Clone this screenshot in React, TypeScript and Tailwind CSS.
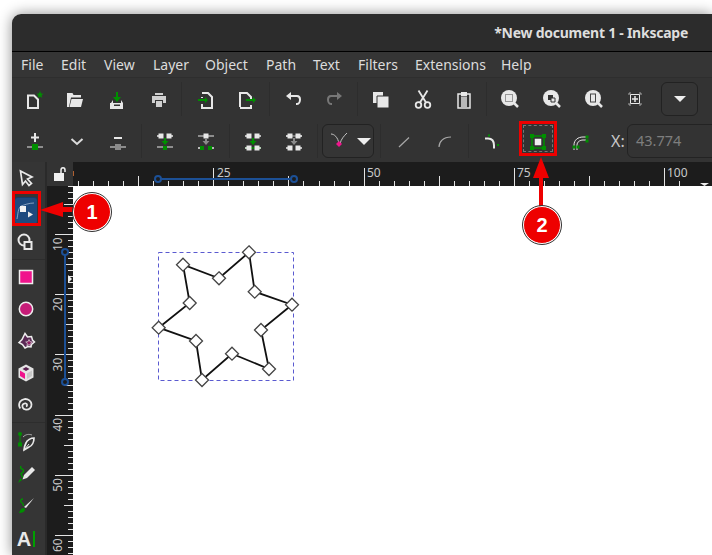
const W = "#e8e8e8";
const G = "#008f00";
const A = "#8a8a8a";

function Ico({ children }: { children: React.ReactNode }) {
  return (
    <svg width="28" height="28" viewBox="0 0 28 28" fill="none">
      {children}
    </svg>
  );
}

function Tool({ wide, children }: { wide?: boolean; children: React.ReactNode }) {
  return (
    <div className={wide ? "w-[42px] h-full flex items-center justify-center shrink-0" : "w-[41px] h-full flex items-center justify-center shrink-0"}>
      <Ico>{children}</Ico>
    </div>
  );
}

function Sep() {
  return (
    <div className="w-[5px] h-full flex justify-center items-center shrink-0">
      <div className="w-px h-[34px] bg-[#2d2d2d]"></div>
    </div>
  );
}

function Sep6() {
  return (
    <div className="w-[6px] h-full flex justify-center items-center shrink-0">
      <div className="w-px h-[34px] bg-[#2d2d2d]"></div>
    </div>
  );
}

function Box({ x, y, s = 5, c = W }: { x: number; y: number; s?: number; c?: string }) {
  return <rect x={x - s / 2} y={y - s / 2} width={s} height={s} fill={c} />;
}

function ArrowDown({ c = G }: { c?: string }) {
  return <path d="M13 11h2v3h2.500L14 18l-3.500-4H13z" fill={c} />;
}

// pair of nodes with short stubs on either side
function Pair({ y, bar }: { y: number; bar?: string }) {
  return (
    <g>
      <path d={`M6 ${y}h16`} stroke={bar || "none"} strokeWidth="1.500" />
      <path d={`M6 ${y}h3M19 ${y}h3`} stroke={W} strokeWidth="1.500" />
      <Box x={10} y={y} />
      <Box x={18} y={y} />
    </g>
  );
}

function Loupe({ children }: { children: React.ReactNode }) {
  return (
    <g>
      <circle cx="13" cy="13" r="8" fill={W} />
      <path d="M18 18l4 4" stroke={W} strokeWidth="2.500" />
      {children}
    </g>
  );
}

function TopBar() {
  return (
    <div className="h-[38px] bg-[#2c2c2c] border-b border-black flex items-center justify-end pr-[24px] rounded-tl-[9px] shrink-0">
      <span className="text-[14px] font-bold text-[#dedede] font-['Noto_Sans',sans-serif] tracking-[-0.25px]">*New document 1 - Inkscape</span>
    </div>
  );
}

function MenuBar() {
  const items: [string, string][] = [
    ["File", "w-[40px]"],
    ["Edit", "w-[43px]"],
    ["View", "w-[49px]"],
    ["Layer", "w-[52px]"],
    ["Object", "w-[61px]"],
    ["Path", "w-[47px]"],
    ["Text", "w-[45px]"],
    ["Filters", "w-[57px]"],
    ["Extensions", "w-[86px]"],
    ["Help", "w-[40px]"],
  ];
  return (
    <div className="h-[26px] bg-[#353535] border-b border-[#2e2e2e] flex items-center pl-[9px] shrink-0">
      {items.map(([t, w]) => (
        <span key={t} className={`${w} text-[14px] text-[#dcdcdc] font-['Noto_Sans',sans-serif]`}>{t}</span>
      ))}
    </div>
  );
}

function RowOne() {
  return (
    <div className="h-[42px] bg-[#333333] flex items-center shrink-0">
      <Tool wide>
        <path d="M9 10.500h6l4 4V23H9z" stroke={W} strokeWidth="2" />
        <path d="M21 6l1 2.500 2.500.2-2 1.600.7 2.500-2.200-1.400-2.200 1.400.7-2.500-2-1.600 2.500-.2z" fill={G} />
      </Tool>
      <Tool wide>
        <path d="M6 8h5.500l1 2H20v2.500H10L8 22H6z" fill={W} />
        <path d="M10.500 14H22l-2 8H8.500z" fill={W} />
      </Tool>
      <Tool wide>
        <path d="M13 7h2v5h3l-4 5-4-5h3z" fill={G} />
        <path d="M8 18l2-3v3h8v-3l2 3v6H7v-6z" fill={W} />
        <path d="M11 19.500h6v1.500h-6z" fill="#333" />
      </Tool>
      <Tool>
        <path d="M10 8h8v2h-8zM7 11h14v7h-3v-3H10v3H7zM11 16h6v6h-6z" fill="#d0d0d0" />
      </Tool>
      <Sep />
      <Tool wide>
        <path d="M11 8h6l4 4v11H11v-4" stroke={W} strokeWidth="2" />
        <path d="M11 12v1" stroke={W} strokeWidth="2" />
        <path d="M7 14h7v-2l3 3-3 3v-2H7z" fill={G} />
      </Tool>
      <Tool>
        <path d="M7 22V8h7l4 4v2M18 20v3H7" stroke={W} strokeWidth="2" />
        <path d="M13 14h7v-2l3 3-3 3v-2h-7z" fill={G} />
      </Tool>
      <Sep />
      <Tool wide>
        <path d="M9 11h9c2.500 0 3 1.500 3 3.500S20 19 18 19h-1" stroke={W} strokeWidth="2" />
        <path d="M12 7l-5 4 5 4z" fill={W} />
      </Tool>
      <Tool>
        <path d="M19 11h-9c-2.500 0-3 1.500-3 3.500S8 19 10 19h1" stroke="#777" strokeWidth="2" />
        <path d="M16 7l5 4-5 4z" fill="#777" />
      </Tool>
      <Sep />
      <Tool wide>
        <path d="M6 7h10v11H6z" fill={W} />
        <path d="M10 11h12v12H10z" fill={W} stroke="#333" strokeWidth="1" />
      </Tool>
      <Tool>
        <circle cx="9.500" cy="20" r="2.800" stroke={W} strokeWidth="1.800" />
        <circle cx="18.500" cy="20" r="2.800" stroke={W} strokeWidth="1.800" />
        <path d="M11 17.500L18.500 5.500M17 17.500L9.500 5.500" stroke={W} strokeWidth="1.800" />
      </Tool>
      <Tool>
        <path d="M8 9h12v14H8z" stroke={W} strokeWidth="1.500" />
        <path d="M11 11.500h6V22h-6z" fill="#b8b8b8" />
        <path d="M11 7h6v4h-6z" fill={W} />
      </Tool>
      <Sep />
      <Tool wide>
        <Loupe>
          <path d="M9.500 9.500h7v7h-7z" stroke="#444" strokeWidth="1" strokeDasharray="1 1" />
        </Loupe>
      </Tool>
      <Tool wide>
        <Loupe>
          <path d="M10 10h5v5h-5z" fill="#333" />
          <path d="M13 13h4v4h-4z" fill={W} stroke="#333" />
        </Loupe>
      </Tool>
      <Tool>
        <Loupe>
          <path d="M10 8.500h6v9h-6z" fill="#444" />
          <path d="M11 9.500h4v7h-4z" fill={W} />
        </Loupe>
      </Tool>
      <Tool>
        <path d="M8 10V8h2M18 8h2v2M20 18v2h-2M10 20H8v-2" stroke="#a8a8a8" strokeWidth="1" />
        <path d="M9.500 9.500h9v9h-9z" stroke={W} strokeWidth="1" />
        <path d="M14 11v6M11 14h6" stroke={W} strokeWidth="1.500" />
      </Tool>
      <div className="w-[5px] shrink-0"></div>
      <div className="w-[37px] h-[34px] ml-px bg-[#353535] border border-[#222] rounded-md flex items-center justify-center shrink-0">
        <div className="w-0 h-0 border-x-[6px] border-x-transparent border-t-[6px] border-t-[#eeeeee]"></div>
      </div>
    </div>
  );
}

function RowTwo() {
  return (
    <div className="h-[42px] bg-[#333333] flex items-center pl-[2px] overflow-hidden shrink-0">
      <Tool wide>
        <path d="M14 6v9M10 10.500h8" stroke={W} strokeWidth="2" />
        <path d="M6 20h16" stroke={W} strokeWidth="1" />
        <Box x={14} y={20} s={6} c={G} />
      </Tool>
      <Tool>
        <path d="M8.500 12l5.500 5 5.500-5" stroke="#dcdcdc" strokeWidth="2" />
      </Tool>
      <Tool>
        <path d="M10 11h8" stroke={W} strokeWidth="2" />
        <path d="M6 20h16" stroke={W} strokeWidth="1" />
        <Box x={14} y={20} s={6} c="#8a8a8a" />
      </Tool>
      <Sep6 />
      <Tool>
        <Pair y={9} />
        <ArrowDown />
        <path d="M6 20h16" stroke={W} strokeWidth="1" />
        <Box x={14} y={21} s={4} c={G} />
      </Tool>
      <Tool>
        <path d="M6 9h16" stroke={W} strokeWidth="1" />
        <Box x={14} y={9} />
        <ArrowDown c={A} />
        <path d="M6 21h3M19 21h3" stroke={W} strokeWidth="1.500" />
        <Box x={10} y={21} s={4} c={G} />
        <Box x={18} y={21} s={4} c={G} />
      </Tool>
      <Sep6 />
      <Tool>
        <Pair y={9} />
        <ArrowDown />
        <Pair y={21} bar={G} />
      </Tool>
      <Tool>
        <Pair y={9} bar={A} />
        <ArrowDown c={A} />
        <Pair y={21} />
      </Tool>
      <Sep6 />
      <div className="w-[52px] h-[34px] ml-[2px] bg-[#353535] border border-[#222] rounded-md flex items-center shrink-0">
        <svg width="34" height="28" viewBox="0 0 34 28" fill="none" className="shrink-0">
          <path d="M8 7c3 0 7 3 8 10M24 6c-3 3-6 6-7 11" stroke="#c4c4c4" strokeWidth="1" />
          <path d="M16 14l3 3-3 3-3-3z" fill="#f0148c" />
        </svg>
        <div className="w-0 h-0 border-x-[7px] border-x-transparent border-t-[7px] border-t-[#eeeeee]"></div>
      </div>
      <div className="w-[3px] shrink-0"></div>
      <Sep6 />
      <Tool>
        <path d="M9 20l10-9.500" stroke="#a8a8a8" strokeWidth="1.200" />
      </Tool>
      <Tool>
        <path d="M8 20c0-5 4-10 12-10" stroke="#a8a8a8" strokeWidth="1.200" />
      </Tool>
      <Sep6 />
      <div className="w-[40px] h-full flex items-center justify-center shrink-0">
        <Ico>
          <path d="M8 11.500h3c4 0 6 2 6 7v3" stroke={W} strokeWidth="2" />
          <Box x={12} y={8.500} s={2} c={G} />
          <Box x={21} y={18} s={2} c={G} />
        </Ico>
      </div>
      <div className="w-[6px] shrink-0"></div>
      <div className="w-[42px] h-full flex items-center justify-center shrink-0">
        <Ico>
          <path d="M8 9h12v12H8z" stroke={G} strokeWidth="1.500" />
          <Box x={8} y={9} s={4} c={G} />
          <Box x={20} y={9} s={4} c={G} />
          <Box x={8} y={21} s={4} c={G} />
          <Box x={20} y={21} s={4} c={G} />
          <Box x={14} y={15} s={6.500} c="#eeeeee" />
        </Ico>
      </div>
      <Tool>
        <path d="M8 23v-5c0-5 4-8 9-8h3M11 23v-5c0-3 3-5 6-5h3" stroke={W} strokeWidth="1" />
        <Box x={21} y={10} s={3} c={G} />
        <Box x={21} y={14} s={3} c={G} />
        <Box x={8} y={20} s={3} c={G} />
        <Box x={12} y={20} s={3} c={G} />
      </Tool>
      <span className="ml-[11px] w-[15px] shrink-0 text-[16px] text-[#c8c8c8] font-['Noto_Sans',sans-serif]">X:</span>
      <div className="ml-[1px] w-[100px] h-[34px] border border-[#232323] rounded-md flex items-center pl-[8px] shrink-0">
        <span className="text-[14.500px] text-[#7e7e7e] font-['Noto_Sans',sans-serif]">43.774</span>
      </div>
    </div>
  );
}

function SideTool({ tall, children }: { tall?: boolean; children: React.ReactNode }) {
  return (
    <div className={tall ? "h-[32px] pr-[5px] flex items-center justify-center shrink-0" : "h-[31px] pr-[5px] flex items-center justify-center shrink-0"}>
      <Ico>{children}</Ico>
    </div>
  );
}

function Toolbox() {
  return (
    <div className="w-[33px] bg-[#353535] flex flex-col shrink-0">
      <SideTool tall>
        <path d="M8.500 7l11.500 6-4.500 2 4 4.500-2.500 2-3.500-4.500-3 3.500z" stroke={W} strokeWidth="1.700" />
      </SideTool>
      <div className="h-[32px] pr-[8px] pl-[3px] flex items-center justify-center relative">
        <div className="w-[22px] h-[27px] rounded-[3px] bg-[#1e4a7e] border-t border-[#163a66] flex items-center justify-center">
          <svg width="22" height="26" viewBox="0 0 22 26" fill="none">
            <path d="M2 21c1-5 1-11 4-13 3-1 8-3 13-3" stroke="#9fb5cf" strokeWidth="0.800" />
            <rect x="5" y="8" width="6" height="6" fill="#f2f2f2" />
            <path d="M13 13.500l5 3-5 3z" fill="#e8e8e8" />
          </svg>
        </div>
      </div>
      <SideTool tall>
        <circle cx="12" cy="12" r="5.500" stroke={W} strokeWidth="2" />
        <path d="M12.500 14h7v7h-7z" fill="#353535" stroke={W} strokeWidth="2" />
      </SideTool>
      <div className="h-px bg-[#2d2d2d] mt-px"></div>
      <div className="h-px"></div>
      <SideTool tall>
        <rect x="7.500" y="7.500" width="13" height="13" fill="#f0148c" stroke="#eeeeee" strokeWidth="1.500" />
      </SideTool>
      <SideTool tall>
        <circle cx="14" cy="14" r="6.700" fill="#c71c78" stroke="#eeeeee" strokeWidth="1.500" />
      </SideTool>
      <SideTool tall>
        <path d="M13 6.500l2.500 3.500 4-.5 1 3.500 2 2-3 2.500-.5 2.500-3-.5-3 1.500-2.500-3.500-3.500-2 3-3z" fill="#5a2a55" stroke="#eeeeee" strokeWidth="1.500" />
        <path d="M17 12.500l1 2.200 2.300.3-1.700 1.500.5 2.300-2.100-1.200-2.100 1.200.5-2.300-1.700-1.500 2.300-.3z" fill="#8f1e62" stroke="#ddd" strokeWidth="0.700" />
      </SideTool>
      <SideTool tall>
        <path d="M14 5.500l7.500 4v9l-7.500 4-7.500-4v-9z" fill="#e4e4e4" />
        <path d="M14 8l3.500 2-3.500 2-3.500-2z" fill="#5a2050" />
        <path d="M8 11.500l5 3v5.500l-5-3z" fill="#f0148c" />
        <path d="M20 11.500l-5 3v5.500l5-3z" fill="#c8c8c8" />
      </SideTool>
      <SideTool tall>
        <path d="M14 15.500c1.500-.5 1.500-3-.5-3.200-2.500-.2-3.800 2.200-2.800 4.300 1.200 2.400 5 2.800 7.200.8 2.400-2.200 2-6-.5-8-2.800-2.200-7.200-1.800-9.200 1.200-1.400 2.200-1.300 5 .1 7" stroke={W} strokeWidth="1.800" />
      </SideTool>
      <div className="h-px bg-[#2d2d2d] mt-px"></div>
      <div className="h-[3px]"></div>
      <SideTool>
        <circle cx="8" cy="6" r="2" fill={G} />
        <path d="M8 6v10" stroke={G} strokeWidth="1" />
        <Box x={8} y={16.500} s={4} c={G} />
        <path d="M11 9c3-3 6-3 9-2" stroke="#aaa" strokeWidth="1" />
        <path d="M22 10c0 4-2 8-5 9l-5 3c0-2 1-5 2-7 1-3 5-5 8-5z" fill="none" stroke={W} strokeWidth="1.700" />
        <path d="M12 22l5-6" stroke={W} strokeWidth="1" />
      </SideTool>
      <SideTool>
        <path d="M11 19l-2-4 2-2c1-1 .5-2.500-1-3-1-.3-2-1-1-3" stroke={G} strokeWidth="1.500" />
        <path d="M20 8l3 3-8 8-4.500 1.500L12 16z" fill={W} />
        <path d="M6 24l4-3-1.500-2z" fill={G} />
      </SideTool>
      <SideTool>
        <path d="M11 16c1.500-2-1-3-2-4s0-3 2-3" stroke={G} strokeWidth="1.300" />
        <path d="M22 8l-8 10-2-1z" fill={W} />
        <path d="M7 23c1-3 2-5 5-5l1 1c0 3-3 4-6 4z" fill={G} />
      </SideTool>
      <div className="h-[4px]"></div>
      <div className="h-[31px] pr-[5px] flex items-center justify-center gap-[2px]">
        <span className="text-[20px] font-bold leading-none text-[#e8e8e8] font-['Liberation_Sans',sans-serif]">A</span>
        <div className="w-[2px] h-[16px] bg-[#00a000]"></div>
      </div>
    </div>
  );
}

function HRuler() {
  const ticks = [];
  for (let k = -10; k < 32; k++) {
    const x = Math.round(140.3 + k * 15.03);
    const major = ((k % 10) + 10) % 10 === 0;
    const mid = ((k % 5) + 5) % 5 === 0;
    const h = major ? 18 : mid ? 10 : 5;
    ticks.push(<rect key={k} x={x} y={24 - h} width="1" height={h} fill="#e4e4e4" />);
  }
  const labels = [
    [141, "25"],
    [291, "50"],
    [441, "75"],
    [591, "100"],
  ] as [number, string][];
  return (
    <svg width="639" height="24" viewBox="0 0 639 24" className="shrink-0 block" shapeRendering="crispEdges">
      {ticks}
      <rect x="0" y="9" width="1" height="5" fill="#b06030" />
      {labels.map(([x, t]) => (
        <text key={t} x={x + 3} y="15" fontSize="12" fill="#c9c9c9" fontFamily="Noto Sans, sans-serif" shapeRendering="auto">{t}</text>
      ))}
      <path d="M85 17h136" stroke="#1c5096" strokeWidth="2" />
      <circle cx="85" cy="17" r="3" fill="#1c1c1c" stroke="#1c5096" strokeWidth="2" shapeRendering="auto" />
      <circle cx="221" cy="17" r="3" fill="#1c1c1c" stroke="#1c5096" strokeWidth="2" shapeRendering="auto" />
      <path d="M627 21h9l-4.500 3z" fill="#eeeeee" shapeRendering="auto" />
    </svg>
  );
}

function VRuler() {
  const ticks = [];
  for (let u = 2; u < 64; u++) {
    const y = Math.round(48 + (u - 10) * 6.02);
    const major = u % 10 === 0;
    const mid = u % 5 === 0;
    const w = major ? 18 : mid ? 9 : 5;
    ticks.push(<rect key={u} x={25 - w} y={y} width={w} height="1" fill="#e4e4e4" />);
  }
  const labels = [10, 20, 30, 40, 50, 60];
  return (
    <svg width="25" height="369" viewBox="0 0 25 369" className="block" shapeRendering="crispEdges">
      {ticks}
      {labels.map((n) => {
        const y = 48 + (n - 10) * 6.02 + 17;
        return (
          <text key={n} x="0" y="0" fontSize="12" fill="#c9c9c9" fontFamily="Noto Sans, sans-serif" shapeRendering="auto" transform={`translate(14 ${y}) rotate(-90)`}>{n}</text>
        );
      })}
      <path d="M17 66v130" stroke="#1c5096" strokeWidth="2" />
      <circle cx="17" cy="66" r="3" fill="#1c1c1c" stroke="#1c5096" strokeWidth="2" shapeRendering="auto" />
      <circle cx="17" cy="196" r="3" fill="#1c1c1c" stroke="#1c5096" strokeWidth="2" shapeRendering="auto" />
      <path d="M20 89l4 4-4 4z" fill="#eeeeee" shapeRendering="auto" />
    </svg>
  );
}

const nodes: [number, number][] = [
  [249, 252.3], [254.7, 291.7], [292, 304.7], [261, 330], [269, 369], [232, 353.7],
  [202, 380], [196, 341], [158.7, 327.7], [189.7, 303], [183, 264.7], [219, 278.3],
];

function Star() {
  const pts = nodes.map(([x, y]) => `${x - 73},${y - 186}`).join(" ");
  return (
    <svg width="240" height="210" viewBox="0 0 240 210" className="block" fill="none">
      <rect x="85.500" y="66.500" width="135" height="128" stroke="#5a5ad0" strokeWidth="1" strokeDasharray="4 3" />
      <polygon points={pts} stroke="#111" strokeWidth="1.800" />
      {nodes.map(([x, y], i) => (
        <path key={i} d={`M${x - 73} ${y - 186 - 6.500}l6.500 6.500-6.500 6.500-6.500-6.500z`} fill="#fff" stroke="#444" strokeWidth="1.300" />
      ))}
    </svg>
  );
}

function Callout({ n, className }: { n: string; className: string }) {
  return (
    <div className={`absolute w-[38px] h-[38px] rounded-full bg-[#ee0000] border border-white outline outline-[#333] flex items-center justify-center ${className}`}>
      <span className="text-[20px] font-bold text-white font-['Liberation_Sans',sans-serif]">{n}</span>
    </div>
  );
}

export default function App() {
  return (
    <div className="relative w-[712px] h-[555px] bg-white overflow-hidden pl-[12px] pt-[14px]">
      <div className="w-[700px] h-[541px] flex flex-col rounded-tl-[9px] shadow-[0_0_14px_rgba(0,0,0,0.45)]">
        <TopBar />
        <MenuBar />
        <RowOne />
        <RowTwo />
        <div className="flex flex-1 min-h-0 overflow-hidden">
          <Toolbox />
          <div className="w-[2px] bg-[#2a2a2a] shrink-0"></div>
          <div className="flex flex-col flex-1 min-w-0">
            <div className="h-[24px] flex bg-[#1c1c1c] shrink-0">
              <div className="w-[26px] bg-[#333333] flex items-center justify-center shrink-0">
                <svg width="16" height="18" viewBox="0 0 16 18" fill="none">
                  <rect x="2" y="8" width="10" height="8" fill="#f0f0f0" />
                  <path d="M9 8V5c0-3 4-3 4 0v2" stroke="#f0f0f0" strokeWidth="1.500" />
                </svg>
              </div>
              <HRuler />
            </div>
            <div className="flex flex-1 min-h-0">
              <div className="w-[26px] bg-[#1c1c1c] pl-px shrink-0">
                <VRuler />
              </div>
              <div className="flex-1 bg-white">
                <Star />
              </div>
            </div>
          </div>
        </div>
      </div>

      {/* annotations */}
      <div className="absolute left-[12px] top-[191px] w-[29px] h-[35px] border-[3px] border-[#ee0000]"></div>
      <div className="absolute left-[519px] top-[121px] w-[38px] h-[35px] border-[3px] border-[#ee0000] p-px">
        <div className="w-full h-full border border-dashed border-[#777]"></div>
      </div>
      <svg width="712" height="555" viewBox="0 0 712 555" className="absolute left-0 top-0 pointer-events-none">
        <path d="M40 210l23-8v5h12v5H63v5z" fill="#ee0000" />
        <path d="M541 157l8 21h-6v30h-4v-30h-6z" fill="#ee0000" />
      </svg>
      <Callout n="1" className="left-[73px] top-[193px]" />
      <Callout n="2" className="left-[523px] top-[206px]" />
    </div>
  );
}
